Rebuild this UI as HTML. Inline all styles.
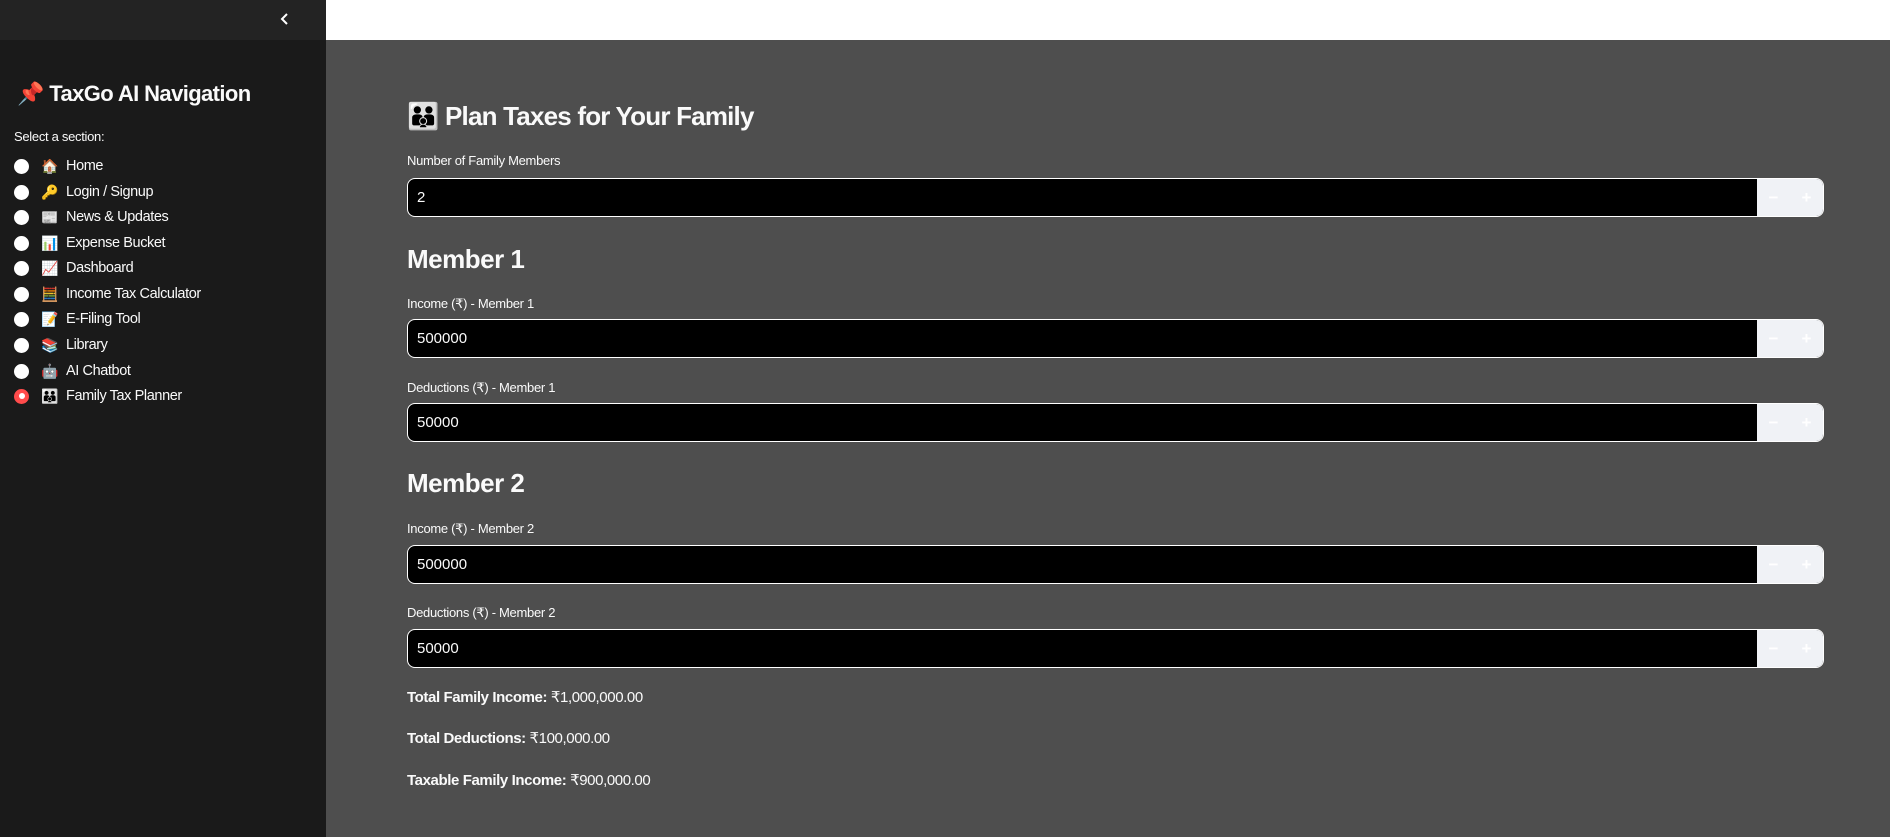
<!DOCTYPE html>
<html><head><meta charset="utf-8"><style>
*{box-sizing:border-box;margin:0;padding:0}
body{width:1890px;height:837px;overflow:hidden;background:#4e4e4e;font-family:"Liberation Sans","DejaVu Sans",sans-serif;color:#fafafa;position:relative}
.sb{position:absolute;left:0;top:0;width:326px;height:837px;background:#1a1a1a}
.sbtop{position:absolute;left:0;top:0;width:326px;height:40px;background:#232323}
.chev{position:absolute;left:278px;top:11px}
.topw{position:absolute;left:326px;top:0;width:1564px;height:40px;background:#fff}
.sbt{position:absolute;left:17px;top:81px;font-size:22px;font-weight:bold;letter-spacing:-0.6px}
.sel{position:absolute;left:14px;top:129px;font-size:13px;letter-spacing:-0.3px}
.it{position:absolute;left:14px;height:20px;font-size:14.5px;display:flex;align-items:center;letter-spacing:-0.4px}
.rd{width:15px;height:15px;border-radius:50%;background:#fff;margin-right:12px}
.rd.on{background:#ff4b4b;display:flex;align-items:center;justify-content:center}
.rd.on:after{content:"";width:6px;height:6px;border-radius:50%;background:#fff}
.em{width:19px;font-size:14px;margin-right:6px}
.h1{position:absolute;left:407px;top:101px;font-size:26px;font-weight:bold;letter-spacing:-0.8px}
.h2{position:absolute;left:407px;font-size:26px;font-weight:bold;letter-spacing:-0.5px}
.lb{position:absolute;left:407px;font-size:13px;letter-spacing:-0.3px}
.in{position:absolute;left:407px;width:1417px;height:39px;border:1.5px solid #fff;border-radius:8px;background:#000;overflow:hidden}
.in span{position:absolute;left:9px;top:10px;font-size:15px}
.st{position:absolute;right:0;top:0;width:66px;height:100%;background:#f0f2f6;color:#fff;font-size:17px;display:flex;justify-content:space-around;align-items:center}
.tt{position:absolute;left:407px;font-size:15px;letter-spacing:-0.4px}
</style></head><body>
<div class="sb"></div><div class="sbtop"></div>
<svg class="chev" width="14" height="16" viewBox="0 0 14 16"><path d="M9 3 L4 8 L9 13" stroke="#fff" stroke-width="2" fill="none"/></svg>
<div class="topw"></div>
<div class="sbt">📌 TaxGo AI Navigation</div>
<div class="sel">Select a section:</div>
<div class="it" style="top:156px"><div class="rd"></div><span class="em">🏠</span>Home</div>
<div class="it" style="top:182px"><div class="rd"></div><span class="em">🔑</span>Login / Signup</div>
<div class="it" style="top:207px"><div class="rd"></div><span class="em">📰</span>News &amp; Updates</div>
<div class="it" style="top:233px"><div class="rd"></div><span class="em">📊</span>Expense Bucket</div>
<div class="it" style="top:258px"><div class="rd"></div><span class="em">📈</span>Dashboard</div>
<div class="it" style="top:284px"><div class="rd"></div><span class="em">🧮</span>Income Tax Calculator</div>
<div class="it" style="top:309px"><div class="rd"></div><span class="em">📝</span>E-Filing Tool</div>
<div class="it" style="top:335px"><div class="rd"></div><span class="em">📚</span>Library</div>
<div class="it" style="top:361px"><div class="rd"></div><span class="em">🤖</span>AI Chatbot</div>
<div class="it" style="top:386px"><div class="rd on"></div><span class="em">👪</span>Family Tax Planner</div>

<div class="h1">👪 Plan Taxes for Your Family</div>
<div class="lb" style="top:153px">Number of Family Members</div>
<div class="in" style="top:178px"><span>2</span><div class="st"><b>−</b><b>+</b></div></div>
<div class="h2" style="top:244px">Member 1</div>
<div class="lb" style="top:296px">Income (₹) - Member 1</div>
<div class="in" style="top:319px"><span>500000</span><div class="st"><b>−</b><b>+</b></div></div>
<div class="lb" style="top:380px">Deductions (₹) - Member 1</div>
<div class="in" style="top:403px"><span>50000</span><div class="st"><b>−</b><b>+</b></div></div>
<div class="h2" style="top:468px">Member 2</div>
<div class="lb" style="top:521px">Income (₹) - Member 2</div>
<div class="in" style="top:545px"><span>500000</span><div class="st"><b>−</b><b>+</b></div></div>
<div class="lb" style="top:605px">Deductions (₹) - Member 2</div>
<div class="in" style="top:629px"><span>50000</span><div class="st"><b>−</b><b>+</b></div></div>
<div class="tt" style="top:688px"><b>Total Family Income:</b> ₹1,000,000.00</div>
<div class="tt" style="top:729px"><b>Total Deductions:</b> ₹100,000.00</div>
<div class="tt" style="top:771px"><b>Taxable Family Income:</b> ₹900,000.00</div>
</body></html>
